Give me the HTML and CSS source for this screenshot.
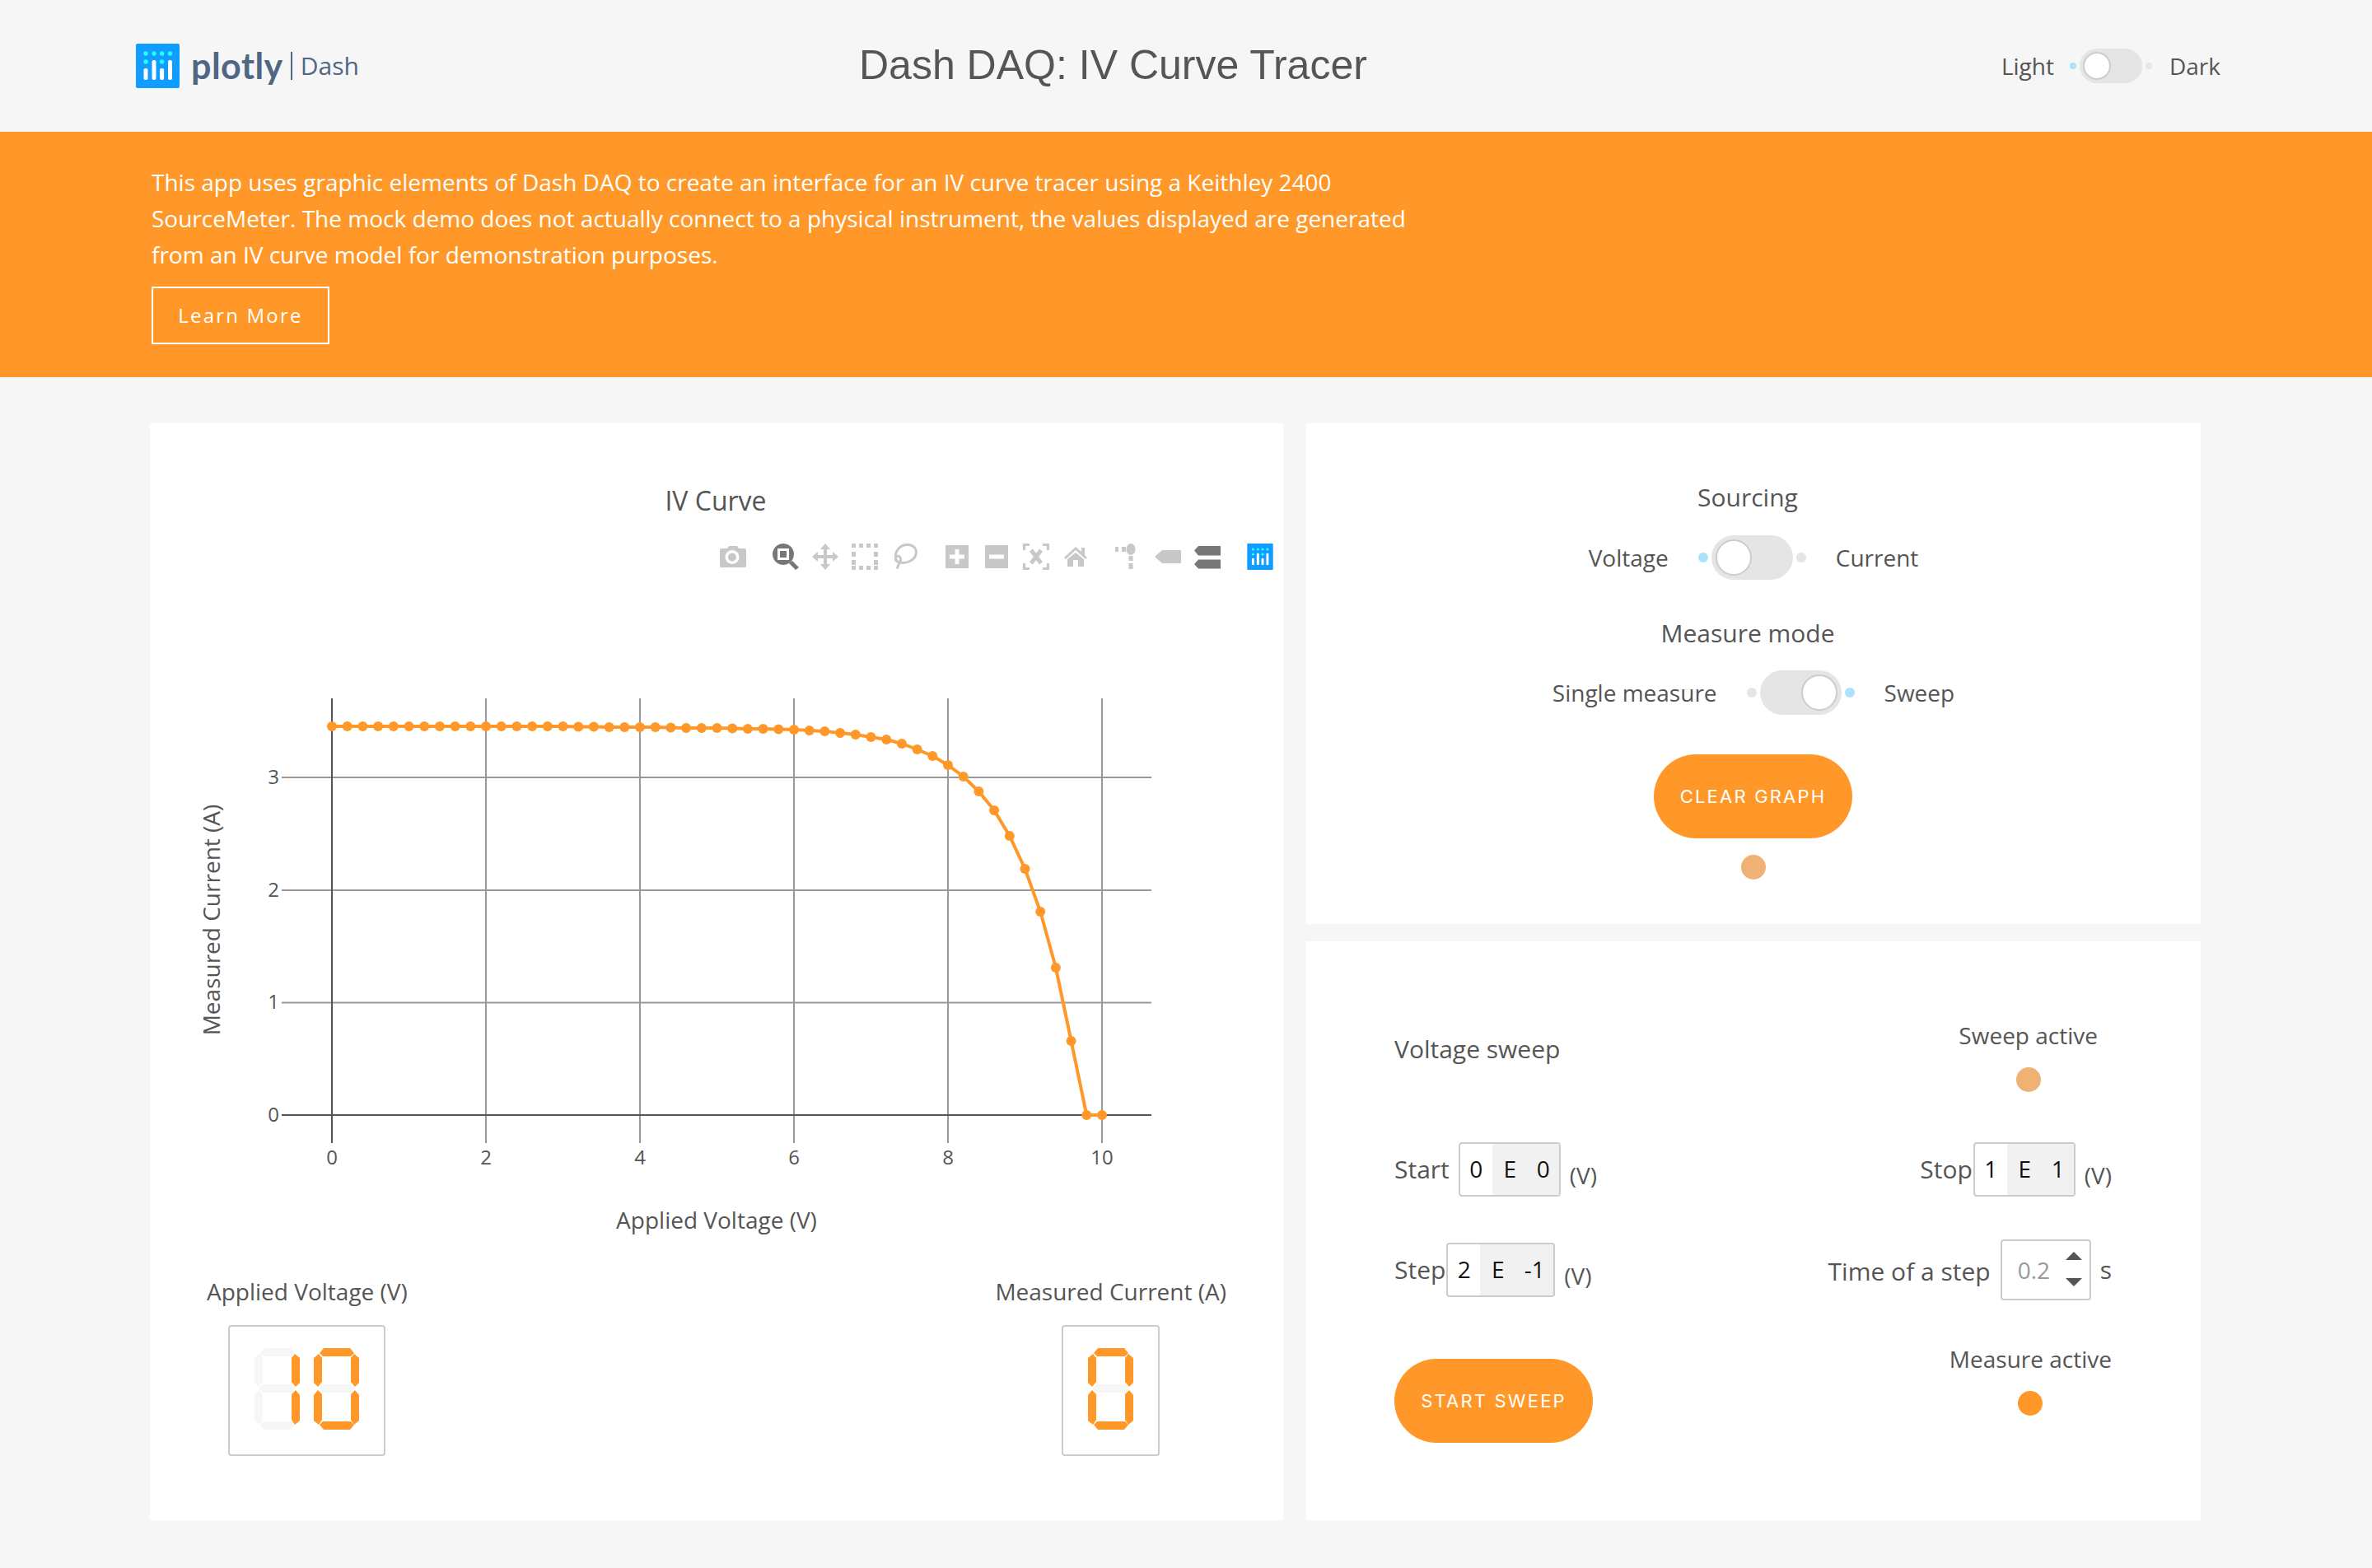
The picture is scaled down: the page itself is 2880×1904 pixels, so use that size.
FILE: index.html
```html
<!DOCTYPE html>
<html>
<head>
  <title>Dash DAQ: IV Curve Tracer</title>
  <link rel="stylesheet" href="styles.css">
</head>
<body>
  <svg class="defs" width="0" height="0">
    <symbol id="plotly-mark" viewBox="0 0 53 54">
      <rect width="53" height="54" rx="2" fill="#119dff"/>
      <g fill="#25fefd">
        <circle cx="12" cy="12" r="2.700"/><circle cx="22" cy="12" r="2.700"/><circle cx="31.600" cy="12" r="2.700"/><circle cx="41.500" cy="12" r="2.700"/>
        <circle cx="12" cy="22" r="2.700"/><circle cx="31.600" cy="22" r="2.700"/>
      </g>
      <g fill="#fff">
        <rect x="9.500" y="30" width="5" height="14" rx="2"/><rect x="19.500" y="20" width="5" height="24" rx="2"/>
        <rect x="29.100" y="30" width="5" height="14" rx="2"/><rect x="39" y="20" width="5" height="24" rx="2"/>
      </g>
    </symbol>
    <symbol id="led" viewBox="0 0 55 99">
      <polygon class="seg-a" points="12,0 44,0 49,6 45,10 11,10 7,6"/>
      <polygon class="seg-b" points="49,7 45,12 45,41 50,47 55,42 55,12"/>
      <polygon class="seg-c" points="50,51 45,56 45,87 49,93 55,88 55,57"/>
      <polygon class="seg-d" points="11,89 45,89 49,93 44,99 12,99 7,93"/>
      <polygon class="seg-e" points="5,51 10,56 10,87 6,93 0,88 0,57"/>
      <polygon class="seg-f" points="6,7 10,12 10,41 5,47 0,42 0,12"/>
      <polygon class="seg-g" points="10,44 45,44 50,49 45,54 10,54 5,49"/>
    </symbol>
  </svg>

  <header class="top-bar">
    <div class="brand">
      <svg class="brand-mark"><use href="#plotly-mark"/></svg>
      <span class="brand-name">plotly</span>
      <span class="brand-app">Dash</span>
    </div>
    <h1 class="app-title">Dash DAQ: IV Curve Tracer</h1>
    <div class="theme-switch">
      <span>Light</span>
      <span class="dot dot-on"></span>
      <span class="track track-small"><span class="knob"></span></span>
      <span class="dot"></span>
      <span>Dark</span>
    </div>
  </header>

  <section class="banner">
    <p>This app uses graphic elements of Dash DAQ to create an interface for an IV curve tracer using a Keithley 2400 SourceMeter. The mock demo does not actually connect to a physical instrument, the values displayed are generated from an IV curve model for demonstration purposes.</p>
    <a class="learn-more">Learn More</a>
  </section>

  <main class="dashboard">
    <section class="card plot-card">
      <!-- chart uses page coordinates in its viewBox -->
      <svg class="iv-chart" viewBox="182 514 1376 1034" width="1376" height="1034">
        <text class="chart-title" x="869" y="620" text-anchor="middle">IV Curve</text>

        <g class="modebar">
          <g transform="translate(874 660)">
            <path class="icon-light" fill-rule="evenodd" d="M0 8a2 2 0 0 1 2-2h7l2-3h10l2 3h7a2 2 0 0 1 2 2v19a2 2 0 0 1-2 2H2a2 2 0 0 1-2-2zM15 8a8.500 8.500 0 1 0 .01 0zM15 11.500a5 5 0 1 1-.01 0z"/>
          </g>
          <g transform="translate(938 660)">
            <path class="icon-dark" fill-rule="evenodd" d="M13 0a13 13 0 1 1-.01 0zM6 6v14h14V6zM9 9h8v8H9zM20 24l4-3 8 8-4 3z"/>
          </g>
          <g transform="translate(986 660)">
            <path class="icon-light" d="M16 0l6 7h-4v7h7v-4l7 6-7 6v-4h-7v7h4l-6 7-6-7h4v-7h-7v4l-7-6 7-6v4h7V7h-4z"/>
          </g>
          <g transform="translate(1034 660)">
            <path class="icon-light" d="M0 0h5v5H0zM9 0h5v5H9zM18 0h5v5h-5zM27 0h5v5h-5zM0 10h5v6H0zM27 10h5v6h-5zM0 20h5v6H0zM27 20h5v6h-5zM0 27h5v5H0zM9 27h5v5H9zM18 27h5v5h-5zM27 27h5v5h-5z"/>
          </g>
          <g transform="translate(1083 660)">
            <path class="icon-stroke" d="M6 22C1 12 8 2 18 1.500c8-.500 13 5 11 12-2 7-12 12-21 9-4-1-5-5-2-7 3-1 6 2 4 6-1 3-3 6-4 9"/>
          </g>
          <g transform="translate(1148 660)">
            <path class="icon-light" fill-rule="evenodd" d="M0 2h28v28H0zM11.500 7v6.500H5v5h6.500V25h5v-6.500H23v-5h-6.500V7z"/>
          </g>
          <g transform="translate(1196 660)">
            <path class="icon-light" fill-rule="evenodd" d="M0 2h28v28H0zM5 13.500v5h18v-5z"/>
          </g>
          <g transform="translate(1242 660)">
            <path class="icon-stroke" d="M8 1.500H1.500V8M24 1.500h6.500V8M8 30.500H1.500V24M24 30.500h6.500V24"/>
            <path class="icon-cross" d="M10 8l12 16M22 8L10 24"/>
          </g>
          <g transform="translate(1292 664)">
            <path class="icon-light" d="M14 0l7 6V1h4v9l3 3-2 2L14 4 2 15l-2-2zM14 7l10 8v9h-7v-8h-6v8H4v-9z"/>
          </g>
          <g transform="translate(1354 660)">
            <path class="icon-light" d="M0 4h4v6H0zM8 4h5v6H8zM16.500 15h5v6h-5zM16.500 24h5v7h-5z"/>
            <ellipse class="icon-light" cx="19" cy="7" rx="5.500" ry="7"/>
          </g>
          <g transform="translate(1402 668)">
            <path class="icon-light" d="M0 8l9-8h23v16H9z"/>
          </g>
          <g transform="translate(1450 663)">
            <path class="icon-dark" d="M0 5.500l5-5.500h27v11.500H5zM0 22l5-5.500h27v11H5z"/>
          </g>
          <use href="#plotly-mark" x="1514" y="660" width="32" height="32" preserveAspectRatio="none"/>
        </g>

        <g class="grid-lines">
          <path d="M590 848V1388M777 848V1388M964 848V1388M1151 848V1388M1338 848V1388"/>
          <path d="M342 944H1398M342 1081H1398M342 1217.500H1398"/>
          <path class="zero-line" d="M403 848V1388M342 1354H1398"/>
        </g>
        <g class="axis-ticks" text-anchor="middle">
          <text x="403" y="1414">0</text><text x="590" y="1414">2</text><text x="777" y="1414">4</text>
          <text x="964" y="1414">6</text><text x="1151" y="1414">8</text><text x="1338" y="1414">10</text>
        </g>
        <g class="axis-ticks" text-anchor="end">
          <text x="339" y="952">3</text><text x="339" y="1089">2</text><text x="339" y="1225">1</text><text x="339" y="1362">0</text>
        </g>
        <text class="axis-title" x="870" y="1492" text-anchor="middle">Applied Voltage (V)</text>
        <text class="axis-title" transform="translate(267 1117) rotate(-90)" text-anchor="middle">Measured Current (A)</text>

        <polyline class="iv-line" points="403,882 421.700,882 440.400,882 459.100,882 477.800,882 496.500,882 515.200,882 533.900,882 552.600,882 571.300,882 590,882 608.700,882 627.400,882 646.100,882 664.800,882 683.500,882 702.200,882.500 720.900,882.500 739.600,883 758.300,883 777,883 795.700,883 814.400,883.500 833.100,884 851.800,884 870.500,884 889.200,884.500 907.900,885 926.600,885 945.300,885.500 964,886 982.700,887 1001.400,888 1020.100,890 1038.800,892 1057.500,895 1076.200,898 1094.900,903 1113.600,910 1132.300,918 1151,929 1169.700,943 1188.400,961 1207.100,984 1225.800,1015 1244.500,1055 1263.200,1107 1281.900,1175 1300.600,1264 1319.300,1354 1338,1354"/>
        <g class="iv-points">
          <circle cx="403" cy="882"/><circle cx="421.700" cy="882"/><circle cx="440.400" cy="882"/><circle cx="459.100" cy="882"/><circle cx="477.800" cy="882"/><circle cx="496.500" cy="882"/><circle cx="515.200" cy="882"/><circle cx="533.900" cy="882"/><circle cx="552.600" cy="882"/><circle cx="571.300" cy="882"/>
          <circle cx="590" cy="882"/><circle cx="608.700" cy="882"/><circle cx="627.400" cy="882"/><circle cx="646.100" cy="882"/><circle cx="664.800" cy="882"/><circle cx="683.500" cy="882"/><circle cx="702.200" cy="882.500"/><circle cx="720.900" cy="882.500"/><circle cx="739.600" cy="883"/><circle cx="758.300" cy="883"/>
          <circle cx="777" cy="883"/><circle cx="795.700" cy="883"/><circle cx="814.400" cy="883.500"/><circle cx="833.100" cy="884"/><circle cx="851.800" cy="884"/><circle cx="870.500" cy="884"/><circle cx="889.200" cy="884.500"/><circle cx="907.900" cy="885"/><circle cx="926.600" cy="885"/><circle cx="945.300" cy="885.500"/>
          <circle cx="964" cy="886"/><circle cx="982.700" cy="887"/><circle cx="1001.400" cy="888"/><circle cx="1020.100" cy="890"/><circle cx="1038.800" cy="892"/><circle cx="1057.500" cy="895"/><circle cx="1076.200" cy="898"/><circle cx="1094.900" cy="903"/><circle cx="1113.600" cy="910"/><circle cx="1132.300" cy="918"/>
          <circle cx="1151" cy="929"/><circle cx="1169.700" cy="943"/><circle cx="1188.400" cy="961"/><circle cx="1207.100" cy="984"/><circle cx="1225.800" cy="1015"/><circle cx="1244.500" cy="1055"/><circle cx="1263.200" cy="1107"/><circle cx="1281.900" cy="1175"/><circle cx="1300.600" cy="1264"/><circle cx="1319.300" cy="1354"/><circle cx="1338" cy="1354"/>
        </g>
      </svg>

      <div class="readouts">
        <div class="readout">
          <span class="readout-label">Applied Voltage (V)</span>
          <div class="led-box">
            <svg class="led-digit digit-1"><use href="#led"/></svg>
            <svg class="led-digit digit-0"><use href="#led"/></svg>
          </div>
        </div>
        <div class="readout">
          <span class="readout-label">Measured Current (A)</span>
          <div class="led-box">
            <svg class="led-digit digit-0"><use href="#led"/></svg>
          </div>
        </div>
      </div>
    </section>

    <div class="side-column">
      <section class="card controls-card">
        <h3 class="control-title">Sourcing</h3>
        <div class="toggle-row source-toggle">
          <span class="toggle-label">Voltage</span>
          <span class="dot dot-big dot-on"></span>
          <span class="track"><span class="knob"></span></span>
          <span class="dot dot-big"></span>
          <span class="toggle-label">Current</span>
        </div>
        <h3 class="control-title title-medium">Measure mode</h3>
        <div class="toggle-row mode-toggle">
          <span class="toggle-label">Single measure</span>
          <span class="dot dot-big"></span>
          <span class="track track-right"><span class="knob"></span></span>
          <span class="dot dot-big dot-on"></span>
          <span class="toggle-label">Sweep</span>
        </div>
        <button class="pill-button clear-button">CLEAR GRAPH</button>
        <span class="lamp lamp-idle"></span>
      </section>

      <section class="card sweep-card">
        <div class="sweep-row sweep-head">
          <h3 class="sweep-title">Voltage sweep</h3>
          <div class="status status-sweep">
            <span>Sweep active</span>
            <span class="lamp lamp-idle"></span>
          </div>
        </div>

        <div class="sweep-row start-row">
          <div class="field">
            <span class="field-name name-start">Start</span>
            <div class="sci-input"><span>0</span><span class="sci-shade">E</span><span class="sci-shade">0</span></div>
            <span class="unit">(V)</span>
          </div>
          <div class="field">
            <span class="field-name">Stop</span>
            <div class="sci-input"><span>1</span><span class="sci-shade">E</span><span class="sci-shade">1</span></div>
            <span class="unit">(V)</span>
          </div>
        </div>

        <div class="sweep-row step-row">
          <div class="field">
            <span class="field-name">Step</span>
            <div class="sci-input sci-wide"><span>2</span><span class="sci-shade">E</span><span class="sci-shade">-1</span></div>
            <span class="unit">(V)</span>
          </div>
          <div class="field">
            <span class="field-name name-time">Time of a step</span>
            <div class="num-input">
              <span>0.2</span>
              <span class="spinner"><i class="arrow-up"></i><i class="arrow-down"></i></span>
            </div>
            <span class="unit-s">s</span>
          </div>
        </div>

        <div class="sweep-row action-row">
          <button class="pill-button">START SWEEP</button>
          <div class="status status-measure">
            <span>Measure active</span>
            <span class="lamp"></span>
          </div>
        </div>
      </section>
    </div>
  </main>
</body>
</html>
```
FILE: styles.css
```css
* {
  box-sizing: border-box;
}

body {
  margin: 0;
  min-height: 1904px;
  background: #f6f6f6;
  color: #555;
  font-family: "Open Sans", sans-serif;
  font-size: 28px;
}

.defs {
  position: absolute;
}

/* header */
.top-bar {
  height: 160px;
  display: flex;
  align-items: center;
  padding: 0 184px 0 165px;
}

.brand {
  display: flex;
  align-items: center;
  width: 878px;
}

.brand-mark {
  width: 53px;
  height: 54px;
  margin-right: 14px;
}

.brand-name {
  font-family: Lato, sans-serif;
  font-weight: 700;
  font-size: 43px;
  letter-spacing: .5px;
  color: #506784;
  padding: 0 9px 2px 0;
  line-height: 1;
}

.brand-app {
  color: #506784;
  font-size: 30px;
  line-height: 34px;
  padding-left: 10px;
  border-left: 2px solid #506784;
}

.app-title {
  margin: 0 0 3px;
  flex: 1;
  font-family: "Liberation Sans", sans-serif;
  font-weight: 400;
  font-size: 50px;
  color: #555;
}

.theme-switch {
  display: flex;
  align-items: center;
}

.dot {
  width: 8px;
  height: 8px;
  margin: 0 4px;
  border-radius: 50%;
  background: #e5e5e5;
}

.dot-big {
  width: 12px;
  height: 12px;
}

.dot-on {
  background: #abe2fb;
}

.theme-switch .dot:nth-child(2) {
  margin-left: 19px;
}

.theme-switch .dot:nth-child(4) {
  margin-right: 21px;
}

.track {
  width: 99px;
  height: 54px;
  padding: 5px;
  display: flex;
  border-radius: 27px;
  background: #e5e5e5;
}

.track-small {
  width: 76px;
  height: 42px;
  padding: 4px;
}

.track-right {
  justify-content: flex-end;
}

.knob {
  width: 44px;
  height: 44px;
  border-radius: 50%;
  background: #fff;
  border: 2px solid #ccc;
}

.track-small .knob {
  width: 34px;
  height: 34px;
}

/* banner */
.banner {
  height: 298px;
  background: #ff9828;
  color: #fff;
  padding: 39px 184px 0;
}

.banner p {
  margin: 0;
  width: 1540px;
  font-size: 28px;
  line-height: 44px;
}

.learn-more {
  display: block;
  width: 216px;
  height: 70px;
  margin-top: 17px;
  border: 2px solid #fff;
  font-size: 24px;
  letter-spacing: 2.200px;
  line-height: 66px;
  text-align: center;
}

/* cards */
.dashboard {
  display: flex;
  gap: 28px;
  padding: 56px 0 0 182px;
}

.card {
  background: #fff;
}

.plot-card {
  width: 1376px;
  height: 1332px;
}

.iv-chart {
  display: block;
  font-family: "Open Sans", sans-serif;
}

.chart-title {
  font-size: 32px;
  fill: #555;
}

.icon-light {
  fill: #c8c8c8;
}

.icon-dark {
  fill: #777;
}

.icon-stroke {
  fill: none;
  stroke: #c8c8c8;
  stroke-width: 3;
}

.icon-cross {
  fill: none;
  stroke: #c8c8c8;
  stroke-width: 5;
}

.grid-lines path {
  fill: none;
  stroke: #999;
  stroke-width: 2;
}

.grid-lines .zero-line {
  stroke: #555;
}

.axis-ticks text {
  font-size: 24px;
  fill: #555;
}

.axis-title {
  font-size: 28px;
  fill: #555;
}

.iv-line {
  fill: none;
  stroke: #ff9828;
  stroke-width: 4;
}

.iv-points circle {
  r: 6px;
  fill: #ff9828;
}

.readouts {
  display: flex;
  justify-content: space-between;
  padding: 0 69px;
}

.readout {
  display: flex;
  flex-direction: column;
  align-items: center;
}

.readout-label {
  line-height: 40px;
  margin-bottom: 21px;
}

.led-box {
  display: flex;
  gap: 17px;
  padding: 26px 30px 30px;
  border: 2px solid #ccc;
  border-radius: 4px;
}

.led-digit {
  width: 55px;
  height: 99px;
  display: block;
  fill: #f6f6f6;
}

/* LED segments that are lit for each digit */
.digit-1 {
  --b: #ff9828;
  --c: #ff9828;
}

.digit-0 {
  --a: #ff9828;
  --b: #ff9828;
  --c: #ff9828;
  --d: #ff9828;
  --e: #ff9828;
  --f: #ff9828;
}

.seg-a { fill: var(--a, #f6f6f6); }
.seg-b { fill: var(--b, #f6f6f6); }
.seg-c { fill: var(--c, #f6f6f6); }
.seg-d { fill: var(--d, #f6f6f6); }
.seg-e { fill: var(--e, #f6f6f6); }
.seg-f { fill: var(--f, #f6f6f6); }
.seg-g { fill: var(--g, #f6f6f6); }

.side-column {
  width: 1086px;
  display: flex;
  flex-direction: column;
  gap: 21px;
}

.controls-card {
  height: 608px;
  padding-top: 66px;
  display: flex;
  flex-direction: column;
  align-items: center;
}

.control-title {
  margin: 0 14px 0 0;
  font-size: 30px;
  line-height: 48px;
  font-weight: 400;
}

.title-medium {
  font-weight: 500;
}

.toggle-row {
  display: flex;
  align-items: center;
}

.source-toggle {
  margin: 22px 0 41px;
}

.mode-toggle {
  margin: 21px 0 48px;
}

.toggle-row .dot {
  margin: 0 4px;
  flex: none;
}

.toggle-row .toggle-label:first-child {
  margin-right: 32px;
}

.toggle-row .toggle-label:last-child {
  margin-left: 32px;
}

.pill-button {
  width: 241px;
  height: 102px;
  border: none;
  border-radius: 51px;
  background: #ff9828;
  color: #fff;
  font-family: Inter, sans-serif;
  font-size: 22px;
  letter-spacing: 2.200px;
  padding: 0;
}

.clear-button {
  margin-right: 1px;
}

.lamp {
  display: block;
  width: 30px;
  height: 30px;
  border-radius: 50%;
  background: #ff9828;
}

.lamp-idle {
  background: #f0b274;
}

.controls-card .lamp {
  margin-top: 20px;
}

.sweep-card {
  height: 703px;
  padding: 0 108px 0 107px;
}

.sweep-row {
  display: flex;
  justify-content: space-between;
}

.sweep-head {
  padding-top: 95px;
  height: 244px;
}

.sweep-title {
  margin: 0;
  font-size: 30px;
  font-weight: 500;
  line-height: 72px;
}

.status {
  display: flex;
  flex-direction: column;
  align-items: center;
}

.status .lamp {
  margin-top: 20px;
}

.status-sweep {
  margin-right: 17px;
}

.field {
  display: flex;
  align-items: flex-start;
}

.field-name {
  margin-right: 1px;
  font-size: 30px;
  line-height: 66px;
}

.name-start {
  margin-right: 11px;
}

.name-time {
  margin-right: 12px;
  line-height: 70px;
}

.sci-input {
  display: flex;
  width: 124px;
  height: 66px;
  border: 2px solid #ccc;
  border-radius: 4px;
  color: #111;
  line-height: 60px;
  text-align: center;
  overflow: hidden;
}

.sci-input span:nth-child(1) {
  width: 39px;
}

.sci-input span:nth-child(2) {
  width: 43px;
}

.sci-input span:nth-child(3) {
  flex: 1;
}

.sci-shade {
  background: #f1f1f1;
}

.sci-wide {
  width: 132px;
}

.unit {
  margin-left: 11px;
  padding-top: 8px;
  line-height: 64px;
}

.start-row {
  height: 122px;
}

.step-row {
  height: 141px;
}

.num-input {
  position: relative;
  display: flex;
  width: 110px;
  height: 74px;
  margin-top: -4px;
  padding-left: 19px;
  border: 2px solid #ccc;
  border-radius: 4px;
  color: #999;
  line-height: 70px;
}

.spinner {
  position: absolute;
  right: 9px;
  top: 13px;
  display: flex;
  flex-direction: column;
  gap: 22px;
}

.arrow-up {
  width: 0;
  height: 0;
  border: 10px solid transparent;
  border-top: 0;
  border-bottom-color: #555;
}

.arrow-down {
  width: 0;
  height: 0;
  border: 10px solid transparent;
  border-bottom: 0;
  border-top-color: #555;
}

.unit-s {
  margin-left: 11px;
  font-size: 30px;
  line-height: 66px;
}

.status-measure {
  margin-top: -19px;
}

.action-row {
  align-items: flex-start;
}
```
